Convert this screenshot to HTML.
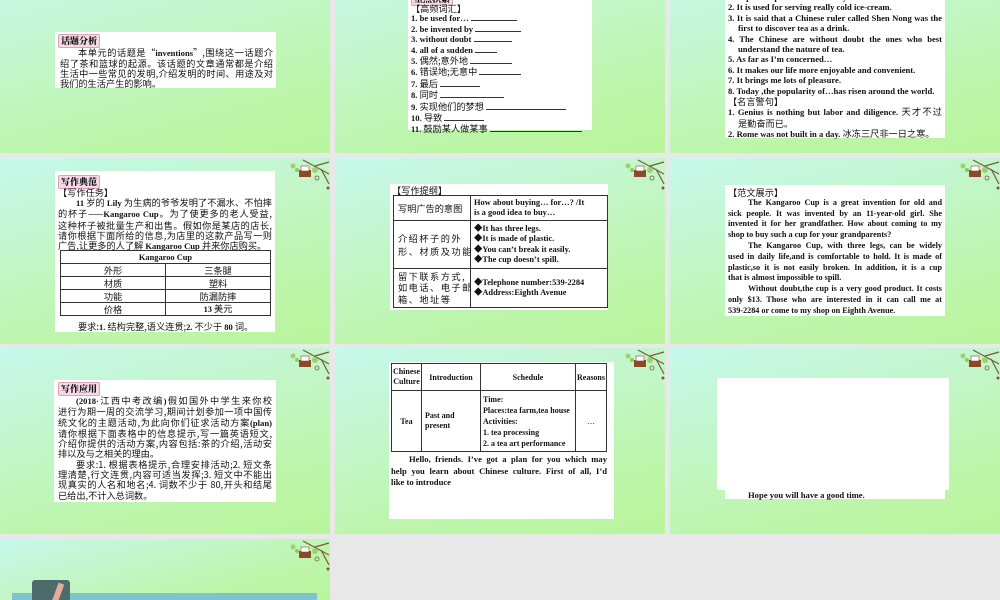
<!DOCTYPE html>
<html style="width:1000px;height:600px;overflow:hidden"><head><meta charset="utf-8"><style>
*{margin:0;padding:0;box-sizing:border-box}
html,body{width:1000px;height:600px;overflow:hidden}
body{background:#e8e8e8;position:relative;font-family:"Liberation Serif","Noto Sans CJK SC",serif;color:#111}
.s{position:absolute;width:330px;height:186px;background:linear-gradient(165deg,#c6f8ec 0%,#c3f6cc 35%,#bdf5a8 75%,#b8f59c 100%);overflow:hidden}
.w{position:absolute;background:#fff}
.a{position:absolute;font-size:8.6px;line-height:10.4px;font-weight:bold;white-space:nowrap}
.c{font-family:"Noto Sans CJK SC",sans-serif;font-weight:normal;font-size:9.2px}
.j{text-align:justify;text-align-last:justify;white-space:normal}
.e{font-family:"Liberation Serif",serif;font-weight:bold;font-size:8.6px}
.tag{display:inline-block;background:#f6d9e4;border:1px solid #d9a3b8;border-radius:2px;padding:0 2px;font-family:"Noto Serif CJK SC",serif;font-weight:900;font-size:9px;line-height:12px}
.u{display:inline-block;border-bottom:0.8px solid #333;height:8px;vertical-align:baseline}
table{position:absolute;border-collapse:collapse;font-size:8.4px;font-weight:bold;table-layout:fixed}
td{border:1px solid #333;padding:0 3px}
.kt td{height:13px;line-height:11px;padding:0;text-align:center}
.deco{position:absolute;right:0;top:0;width:45px;height:40px}
</style></head><body>
<svg width="0" height="0" style="position:absolute"><defs><g id="d">
<path d="M18 2 L44 16 M30 8 L44 4 M36 11 L44 26" stroke="#7a5a3a" stroke-width="1.2" fill="none"/>
<rect x="14" y="12" width="12" height="7" fill="#8b4a25"/><rect x="16" y="8" width="8" height="5" fill="#fff" stroke="#8b4a25" stroke-width=".6"/>
<circle cx="8" cy="8" r="2.5" fill="#9bd36a"/><circle cx="30" cy="12" r="3" fill="#9bd36a"/><circle cx="12" cy="12" r="2" fill="#8cc95a"/>
<circle cx="32" cy="20" r="2" fill="none" stroke="#7a5a3a" stroke-width=".8"/><circle cx="43" cy="30" r="1.5" fill="#7a5a3a"/>
</g></defs></svg>

<!-- Row 1 -->
<div class="s" style="left:0;top:-33px">
 <svg class="deco" viewBox="0 0 45 40"><use href="#d"/></svg>
 <div class="w" style="left:55px;top:65px;width:221px;height:56px"></div>
 <div class="a" style="left:58px;top:67px"><span class="tag">话题分析</span></div>
 <div class="a c" style="left:60px;top:80px;width:213px;line-height:10px">
  <div class="j" style="padding-left:18px">本单元的话题是“<span class="e">inventions</span>”,围绕这一话题介</div>
  <div class="j">绍了茶和篮球的起源。该话题的文章通常都是介绍</div>
  <div class="j">生活中一些常见的发明,介绍发明的时间、用途及对</div>
  <div>我们的生活产生的影响。</div></div>
</div>
<div class="s" style="left:335px;top:-33px">
 <svg class="deco" viewBox="0 0 45 40"><use href="#d"/></svg>
 <div class="w" style="left:73px;top:26px;width:184px;height:137px"></div>
 <div class="a" style="left:76px;top:25px"><span class="tag">重点积累</span></div>
 <div class="a" style="left:76px;top:36px;line-height:10.4px">
  <div class="c" style="line-height:10.4px">【高频词汇】</div>
  <div>1. be used for… <span class="u" style="width:46px"></span></div>
  <div>2. be invented by <span class="u" style="width:46px"></span></div>
  <div>3. without doubt <span class="u" style="width:38px"></span></div>
  <div>4. all of a sudden <span class="u" style="width:22px"></span></div>
  <div>5. <span class="c">偶然;意外地</span> <span class="u" style="width:42px"></span></div>
  <div>6. <span class="c">错误地;无意中</span> <span class="u" style="width:42px"></span></div>
  <div>7. <span class="c">最后</span> <span class="u" style="width:40px"></span></div>
  <div>8. <span class="c">同时</span> <span class="u" style="width:64px"></span></div>
  <div>9. <span class="c">实现他们的梦想</span> <span class="u" style="width:80px"></span></div>
  <div>10. <span class="c">导致</span> <span class="u" style="width:40px"></span></div>
  <div>11. <span class="c">鼓励某人做某事</span> <span class="u" style="width:92px"></span></div>
 </div>
</div>
<div class="s" style="left:670px;top:-33px">
 <svg class="deco" viewBox="0 0 45 40"><use href="#d"/></svg>
 <div class="w" style="left:55px;top:20px;width:220px;height:151px"></div>
 <div class="a" style="left:58px;top:25px;width:214px">
  <div>1. Paper lamps were invented by chance.</div>
  <div>2. It is used for serving really cold ice-cream.</div>
  <div class="j">3. It is said that a Chinese ruler called Shen Nong was the</div>
  <div style="padding-left:10px">first to discover tea as a drink.</div>
  <div class="j">4. The Chinese are without doubt the ones who best</div>
  <div style="padding-left:10px">understand the nature of tea.</div>
  <div>5. As far as I’m concerned…</div>
  <div>6. It makes our life more enjoyable and convenient.</div>
  <div>7. It brings me lots of pleasure.</div>
  <div>8. Today ,the popularity of…has risen around the world.</div>
  <div class="c">【名言警句】</div>
  <div class="j">1. Genius is nothing but labor and diligence. <span class="c">天才不过</span></div>
  <div class="c" style="padding-left:10px">是勤奋而已。</div>
  <div>2. Rome was not built in a day. <span class="c">冰冻三尺非一日之寒。</span></div>
 </div>
</div>

<!-- Row 2 -->
<div class="s" style="left:0;top:158px">
 <svg class="deco" viewBox="0 0 45 40"><use href="#d"/></svg>
 <div class="w" style="left:55px;top:13px;width:220px;height:161px"></div>
 <div class="a" style="left:58px;top:17px"><span class="tag">写作典范</span></div>
 <div class="a c" style="left:58px;top:29px;width:214px;line-height:10.2px">
  <div>【写作任务】</div>
  <div class="j" style="padding-left:18px"><span class="e">11</span> 岁的 <span class="e">Lily</span> 为生病的爷爷发明了不漏水、不怕摔</div>
  <div class="j">的杯子——<span class="e">Kangaroo Cup</span>。为了使更多的老人受益,</div>
  <div class="j">这种杯子被批量生产和出售。假如你是某店的店长,</div>
  <div class="j">请你根据下面所给的信息,为店里的这款产品写一则</div>
  <div>广告,让更多的人了解 <span class="e">Kangaroo Cup</span> 并来你店购买。</div>
 </div>
 <table class="kt" style="left:60px;top:92px;width:211px">
  <tr><td colspan="2">Kangaroo Cup</td></tr>
  <tr><td class="c">外形</td><td class="c">三条腿</td></tr>
  <tr><td class="c">材质</td><td class="c">塑料</td></tr>
  <tr><td class="c">功能</td><td class="c">防漏防摔</td></tr>
  <tr><td class="c">价格</td><td>13 <span class="c">美元</span></td></tr>
 </table>
 <div class="a c" style="left:78px;top:163px">要求:<span class="e">1.</span> 结构完整,语义连贯;<span class="e">2.</span> 不少于 <span class="e">80</span> 词。</div>
</div>
<div class="s" style="left:335px;top:158px">
 <svg class="deco" viewBox="0 0 45 40"><use href="#d"/></svg>
 <div class="w" style="left:55px;top:26px;width:218px;height:126px"></div>
 <div class="a c" style="left:57px;top:27px">【写作提纲】</div>
 <table style="left:58px;top:37px;width:215px">
  <colgroup><col style="width:77px"><col></colgroup>
  <tr><td class="c" style="height:25px;white-space:nowrap;padding:0 4px">写明广告的意图</td><td style="line-height:10px">How about buying… for…? /It<br>is a good idea to buy…</td></tr>
  <tr><td class="c" style="height:48px;line-height:13px;white-space:nowrap;padding:0 4px;letter-spacing:1.5px">介绍杯子的外<br>形、材质及功能</td><td style="line-height:10.4px">◆It has three legs.<br>◆It is made of plastic.<br>◆You can’t break it easily.<br>◆The cup doesn’t spill.</td></tr>
  <tr><td class="c" style="height:39px;line-height:11.5px;white-space:nowrap;padding:0 4px;letter-spacing:1.5px">留下联系方式,<br>如电话、电子邮<br>箱、地址等</td><td style="line-height:10.4px">◆Telephone number:539-2284<br>◆Address:Eighth Avenue</td></tr>
 </table>
</div>
<div class="s" style="left:670px;top:158px">
 <svg class="deco" viewBox="0 0 45 40"><use href="#d"/></svg>
 <div class="w" style="left:55px;top:27px;width:220px;height:131px"></div>
 <div class="a" style="left:58px;top:29px;width:214px;line-height:10.8px;font-size:8.2px">
  <div class="c">【范文展示】</div>
  <div class="j" style="padding-left:20px">The Kangaroo Cup is a great invention for old and</div>
  <div class="j">sick people. It was invented by an 11-year-old girl. She</div>
  <div class="j">invented it for her grandfather. How about coming to my</div>
  <div>shop to buy such a cup for your grandparents?</div>
  <div class="j" style="padding-left:20px">The Kangaroo Cup, with three legs, can be widely</div>
  <div class="j">used in daily life,and is comfortable to hold. It is made of</div>
  <div class="j">plastic,so it is not easily broken. In addition, it is a cup</div>
  <div>that is almost impossible to spill.</div>
  <div class="j" style="padding-left:20px">Without doubt,the cup is a very good product. It costs</div>
  <div class="j">only $13. Those who are interested in it can call me at</div>
  <div>539-2284 or come to my shop on Eighth Avenue.</div>
 </div>
</div>

<!-- Row 3 -->
<div class="s" style="left:0;top:348px">
 <svg class="deco" viewBox="0 0 45 40"><use href="#d"/></svg>
 <div class="w" style="left:54px;top:32px;width:222px;height:122px"></div>
 <div class="a" style="left:58px;top:34px"><span class="tag">写作应用</span></div>
 <div class="a c" style="left:58px;top:47px;width:214px;line-height:10.3px">
  <div class="j" style="padding-left:18px"><span class="e">(2018·</span>江西中考改编<span class="e">)</span>假如国外中学生来你校</div>
  <div class="j">进行为期一周的交流学习,期间计划参加一项中国传</div>
  <div class="j">统文化的主题活动,为此向你们征求活动方案<span class="e">(plan)</span></div>
  <div class="j">请你根据下面表格中的信息提示,写一篇英语短文,</div>
  <div class="j">介绍你提供的活动方案,内容包括:茶的介绍,活动安</div>
  <div>排以及与之相关的理由。</div>
  <div class="j" style="padding-left:18px">要求:1. 根据表格提示,合理安排活动;2. 短文条</div>
  <div class="j">理清楚,行文连贯,内容可适当发挥;3. 短文中不能出</div>
  <div class="j">现真实的人名和地名;4. 词数不少于 80,开头和结尾</div>
  <div>已给出,不计入总词数。</div>
 </div>
</div>
<div class="s" style="left:335px;top:348px">
 <svg class="deco" viewBox="0 0 45 40"><use href="#d"/></svg>
 <div class="w" style="left:54px;top:14px;width:225px;height:157px"></div>
 <table style="left:56px;top:15px;width:216px;font-size:8px">
  <colgroup><col style="width:30px"><col style="width:59px"><col style="width:95px"><col></colgroup>
  <tr style="text-align:center"><td style="padding:0;line-height:10px;height:27px">Chinese<br>Culture</td><td>Introduction</td><td>Schedule</td><td style="padding:0">Reasons</td></tr>
  <tr><td style="text-align:center;height:61px">Tea</td><td style="line-height:10px">Past and<br>present</td><td style="line-height:11px;padding:0 2px">Time:<br>Places:tea farm,tea house<br>Activities:<br>1. tea processing<br>2. a tea art performance</td><td style="text-align:center;font-weight:normal">…</td></tr>
 </table>
 <div class="a" style="left:56px;top:106px;width:216px;line-height:11.5px">
  <div class="j" style="padding-left:18px">Hello, friends. I’ve got a plan for you which may</div>
  <div class="j">help you learn about Chinese culture. First of all, I’d</div>
  <div>like to introduce</div>
 </div>
</div>
<div class="s" style="left:670px;top:348px">
 <svg class="deco" viewBox="0 0 45 40"><use href="#d"/></svg>
 <div class="w" style="left:47px;top:30px;width:232px;height:112px"></div>
 <div class="w" style="left:55px;top:140px;width:220px;height:11px"></div>
 <div class="a" style="left:78px;top:142px">Hope you will have a good time.</div>
</div>

<!-- Row 4 -->
<div class="s" style="left:0;top:539px;height:61px">
 <svg class="deco" viewBox="0 0 45 40"><use href="#d"/></svg>
 <div style="position:absolute;left:12px;top:54px;width:305px;height:20px;background:#7cc4d0"></div>
 <div style="position:absolute;left:32px;top:41px;width:38px;height:30px;background:#4d6b6b;border-radius:3px"></div>
 <div style="position:absolute;left:55px;top:44px;width:6px;height:20px;background:#e8a99a;transform:rotate(20deg)"></div>
</div>
</body></html>
